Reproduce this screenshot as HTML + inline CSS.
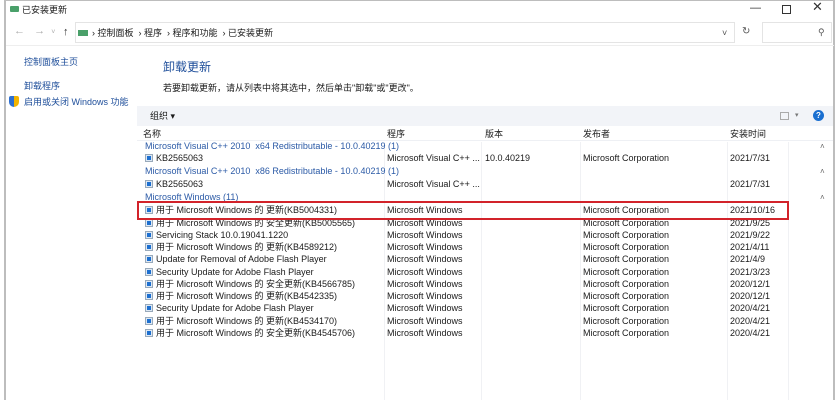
<!DOCTYPE html>
<html><head><meta charset="utf-8"><style>
*{margin:0;padding:0;box-sizing:border-box}
body{width:838px;height:400px;overflow:hidden;background:#fff;font-family:"Liberation Sans","Noto Sans CJK SC",sans-serif;font-size:9px;color:#1a1a1a;position:relative}
.a{position:absolute;white-space:nowrap;line-height:12px;height:12px}
.lnk{color:#1e4e9a}
.g{color:#2b5aa6}
.ic{display:inline-block;width:8px;height:8px;border:1px solid #9ab;background:#dde8f4;position:relative;vertical-align:-1px;margin-right:3px}
.ic:after{content:"";position:absolute;left:1px;top:1px;width:4px;height:4px;background:#1c6fd0}
.vl{position:absolute;top:142px;bottom:0;width:1px;background:#f0f1f4}
</style></head><body>
<div class="a" style="left:4px;top:0;width:2px;height:400px;background:#bdbdbd"></div>
<div class="a" style="left:833px;top:0;width:2px;height:400px;background:#bdbdbd"></div>
<div class="a" style="left:4px;top:0;width:831px;height:1px;background:#bdbdbd"></div>
<div class="a" style="left:10px;top:6px;width:9px;height:6px;background:#4aa06a;border-radius:1px"></div>
<div class="a" style="left:22px;top:4px">已安装更新</div>
<div class="a" style="left:750px;top:2px;font-size:11px;color:#333">—</div>
<div class="a" style="left:782px;top:5px;width:9px;height:9px;border:1px solid #333"></div>
<div class="a" style="left:812px;top:1px;font-size:13px;color:#333">✕</div>
<div class="a" style="left:14px;top:25px;color:#aaa;font-size:11px">←&nbsp;&nbsp;&nbsp;→&nbsp;&nbsp;<span style="font-size:7px">˅</span></div>
<div class="a" style="left:63px;top:26px;color:#333;font-size:11px">↑</div>
<div class="a" style="left:75px;top:22px;width:660px;height:21px;border:1px solid #e4e4e4"></div>
<div class="a" style="left:78px;top:30px;width:10px;height:6px;background:#4aa06a"></div>
<div class="a" style="left:92px;top:27px">›&nbsp;控制面板&nbsp;&nbsp;›&nbsp;程序&nbsp;&nbsp;›&nbsp;程序和功能&nbsp;&nbsp;›&nbsp;已安装更新</div>
<div class="a" style="left:722px;top:27px;color:#555">˅</div>
<div class="a" style="left:742px;top:26px;color:#555;font-size:10px">↻</div>
<div class="a" style="left:762px;top:22px;width:70px;height:21px;border:1px solid #e4e4e4"></div>
<div class="a" style="left:818px;top:26px;color:#555;font-size:9px">⚲</div>
<div class="a" style="left:6px;top:45px;width:828px;height:1px;background:#eee"></div>
<div class="a lnk" style="left:24px;top:56px">控制面板主页</div>
<div class="a lnk" style="left:24px;top:80px">卸载程序</div>
<div class="a" style="left:9px;top:96px;width:10px;height:11px;background:linear-gradient(90deg,#2d6fd1 50%,#f2b400 50%);border-radius:2px 2px 5px 5px"></div>
<div class="a lnk" style="left:24px;top:96px">启用或关闭 Windows 功能</div>
<div class="a" style="left:163px;top:59px;font-size:12px;height:16px;line-height:16px;color:#1e4e9a">卸载更新</div>
<div class="a" style="left:163px;top:82px">若要卸载更新，请从列表中将其选中，然后单击"卸载"或"更改"。</div>
<div class="a" style="left:137px;top:106px;width:696px;height:20px;background:#f2f4f8"></div>
<div class="a" style="left:150px;top:110px">组织 ▾</div>
<div class="a" style="left:780px;top:112px;width:9px;height:8px;border:1px solid #aaa"></div>
<div class="a" style="left:795px;top:110px;color:#777;font-size:7px">▾</div>
<div class="a" style="left:813px;top:110px;width:11px;height:11px;border-radius:50%;background:#1a6fd0;color:#fff;font-size:8px;text-align:center;line-height:11px;font-weight:bold">?</div>
<div class="a" style="left:143px;top:128px">名称</div>
<div class="a" style="left:387px;top:128px">程序</div>
<div class="a" style="left:485px;top:128px">版本</div>
<div class="a" style="left:583px;top:128px">发布者</div>
<div class="a" style="left:730px;top:128px">安装时间</div>
<div class="vl" style="left:384px"></div>
<div class="vl" style="left:481px"></div>
<div class="vl" style="left:580px"></div>
<div class="vl" style="left:727px"></div>
<div class="vl" style="left:788px"></div>
<div class="a" style="left:137px;top:140px;width:696px;height:1px;background:#eef0f4"></div>
<div class="a g" style="left:145px;top:140px">Microsoft Visual C++ 2010&nbsp; x64 Redistributable - 10.0.40219 (1)</div>
<div class="a" style="left:820px;top:141px;color:#666;font-size:8px">˄</div>
<div class="a" style="left:145px;top:152px"><span class="ic"></span>KB2565063</div>
<div class="a" style="left:387px;top:152px">Microsoft Visual C++ ...</div>
<div class="a" style="left:485px;top:152px">10.0.40219</div>
<div class="a" style="left:583px;top:152px">Microsoft Corporation</div>
<div class="a" style="left:730px;top:152px">2021/7/31</div>
<div class="a g" style="left:145px;top:165px">Microsoft Visual C++ 2010&nbsp; x86 Redistributable - 10.0.40219 (1)</div>
<div class="a" style="left:820px;top:166px;color:#666;font-size:8px">˄</div>
<div class="a" style="left:145px;top:178px"><span class="ic"></span>KB2565063</div>
<div class="a" style="left:387px;top:178px">Microsoft Visual C++ ...</div>
<div class="a" style="left:730px;top:178px">2021/7/31</div>
<div class="a g" style="left:145px;top:191px">Microsoft Windows (11)</div>
<div class="a" style="left:820px;top:192px;color:#666;font-size:8px">˄</div>
<div id="rows"></div>
<div class="a" style="left:137px;top:201px;width:652px;height:19px;border:2px solid #d2232a"></div>
<script>
var r=[["用于 Microsoft Windows 的 更新(KB5004331)","2021/10/16"],["用于 Microsoft Windows 的 安全更新(KB5005565)","2021/9/25"],["Servicing Stack 10.0.19041.1220","2021/9/22"],["用于 Microsoft Windows 的 更新(KB4589212)","2021/4/11"],["Update for Removal of Adobe Flash Player","2021/4/9"],["Security Update for Adobe Flash Player","2021/3/23"],["用于 Microsoft Windows 的 安全更新(KB4566785)","2020/12/1"],["用于 Microsoft Windows 的 更新(KB4542335)","2020/12/1"],["Security Update for Adobe Flash Player","2020/4/21"],["用于 Microsoft Windows 的 更新(KB4534170)","2020/4/21"],["用于 Microsoft Windows 的 安全更新(KB4545706)","2020/4/21"]];
var h="";r.forEach(function(x,i){var t=(i==0?204:216.5+(i-1)*12.25);
h+='<div class="a" style="left:145px;top:'+t+'px"><span class="ic"></span>'+x[0]+'</div><div class="a" style="left:387px;top:'+t+'px">Microsoft Windows</div><div class="a" style="left:583px;top:'+t+'px">Microsoft Corporation</div><div class="a" style="left:730px;top:'+t+'px">'+x[1]+'</div>';});
document.getElementById("rows").innerHTML=h;
</script>
</body></html>
